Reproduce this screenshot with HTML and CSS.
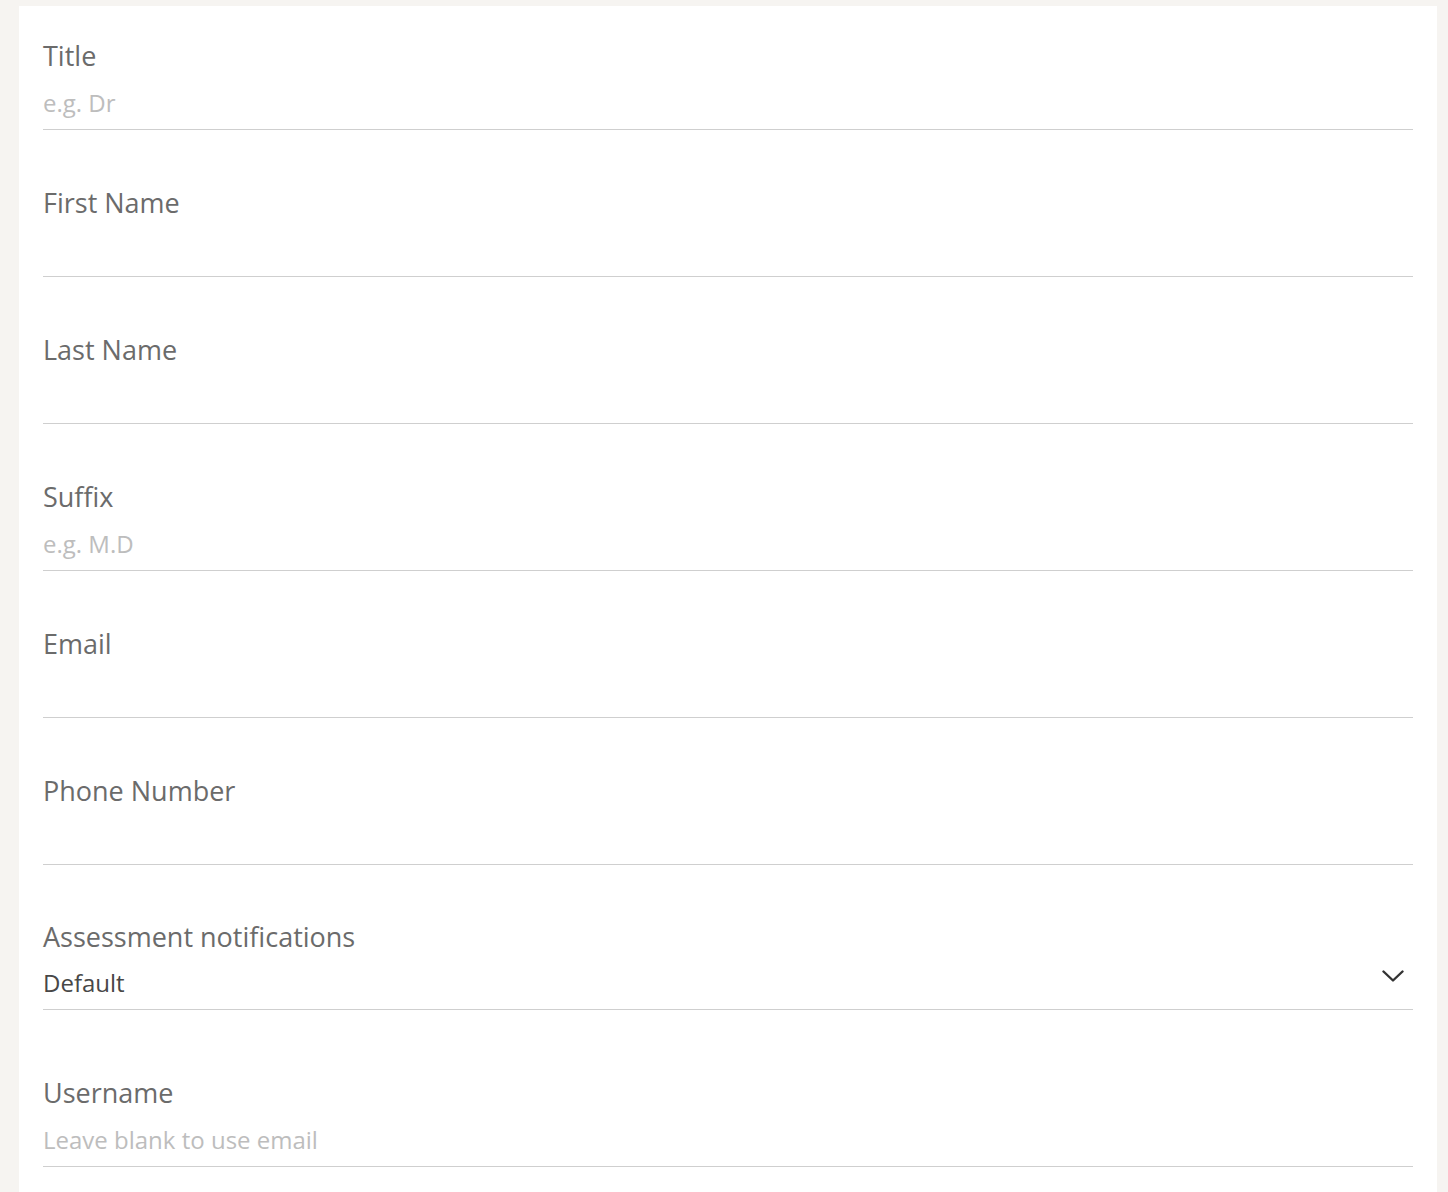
FILE: index.html
```html
<!DOCTYPE html>
<html lang="en">
<head>
    <meta charset="UTF-8">
    <meta name="viewport" content="width=device-width, initial-scale=1.0">
    <title>Profile</title>
    <link rel="stylesheet" href="styles.css">
</head>
<body>
    <div class="card">
        <form class="profile-form">
            <div class="field">
                <label for="title">Title</label>
                <input id="title" type="text" placeholder="e.g. Dr">
            </div>
            <div class="field">
                <label for="firstName">First Name</label>
                <input id="firstName" type="text">
            </div>
            <div class="field">
                <label for="lastName">Last Name</label>
                <input id="lastName" type="text">
            </div>
            <div class="field">
                <label for="suffix">Suffix</label>
                <input id="suffix" type="text" placeholder="e.g. M.D">
            </div>
            <div class="field">
                <label for="email">Email</label>
                <input id="email" type="email">
            </div>
            <div class="field">
                <label for="phone">Phone Number</label>
                <input id="phone" type="tel">
            </div>
            <div class="field field-select">
                <label for="notifications">Assessment notifications</label>
                <div class="select-wrap">
                    <select id="notifications">
                        <option>Default</option>
                        <option>Always</option>
                        <option>Never</option>
                    </select>
                    <svg class="chevron" width="22" height="12" viewBox="0 0 22 12"><path d="M1.5 1.5 L11 10.5 L20.5 1.5" fill="none" stroke="#333" stroke-width="2.4" stroke-linecap="round" stroke-linejoin="round"/></svg>
                </div>
            </div>
            <div class="field field-after-select">
                <label for="username">Username</label>
                <input id="username" type="text" placeholder="Leave blank to use email">
            </div>
        </form>
    </div>
</body>
</html>
```

FILE: styles.css
```css
html, body {
    background-color: #f6f4f1;
}
body {
    margin: 6px 11px 0 19px;
    font-family: "Open Sans", "Liberation Sans", sans-serif;
}

.card {
    background-color: #fff;
    padding: 0 24px 40px 24px;
    box-shadow: 0 0 2px rgba(0, 0, 0, 0.04);
}

.field {
    display: flex;
    flex-direction: column;
    padding-top: 56px;
    border-bottom: 1px solid #cfcfcf;
}
.field:first-child {
    padding-top: 33px;
}
.field-select {
    padding-top: 55px;
}
.field-after-select {
    padding-top: 66px;
}

.field label {
    font-size: 27px;
    line-height: 34px;
    color: #6b6b6b;
}

.field input,
.field select {
    box-sizing: border-box;
    font-family: inherit;
    font-size: 24px;
    line-height: 34px;
    height: 44px;
    margin-top: 12px;
    padding: 0 0 10px 0;
    border: none;
    outline: none;
    background: none;
    color: #444;
}
.field input::placeholder {
    color: #bdbdbd;
}

.select-wrap {
    position: relative;
}
.field select {
    appearance: none;
    -webkit-appearance: none;
    width: 100%;
    margin-top: 11px;
    color: #474747;
    padding-bottom: 9px;
}
.chevron {
    position: absolute;
    right: 9px;
    top: 16px;
    pointer-events: none;
}
```
